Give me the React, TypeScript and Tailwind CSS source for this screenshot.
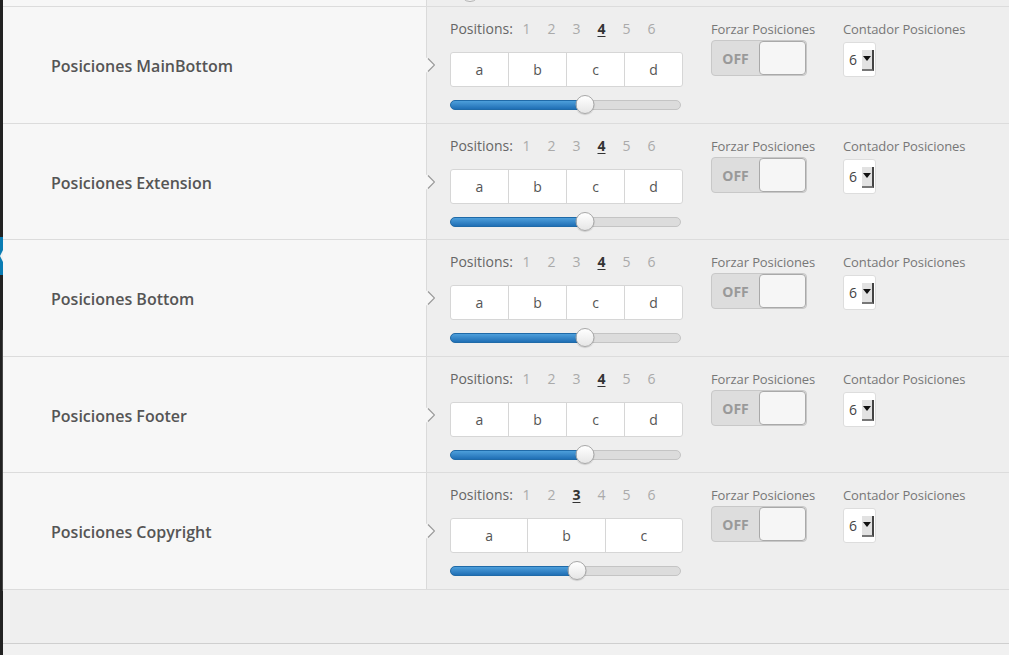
import React from "react";

type RowDef = { label: string; n: number; h: string; thumb: number };

const rows: RowDef[] = [
  { label: "Posiciones MainBottom", n: 4, h: "h-[117px]", thumb: 135 },
  { label: "Posiciones Extension", n: 4, h: "h-[116px]", thumb: 135 },
  { label: "Posiciones Bottom", n: 4, h: "h-[117px]", thumb: 135 },
  { label: "Posiciones Footer", n: 4, h: "h-[116px]", thumb: 135 },
  { label: "Posiciones Copyright", n: 3, h: "h-[117px]", thumb: 127 },
];

const letters = ["a", "b", "c", "d", "e", "f"];

function Chevron() {
  return (
    <svg
      className="absolute left-[422px] top-1/2 -translate-y-1/2"
      width="10"
      height="16"
      viewBox="0 0 10 16"
    >
      <polygon points="0,0 3,1.5 9.5,8 3,14.5 0,16" fill="#f7f7f7" />
      <polyline points="3,1.5 9.5,8 3,14.5" fill="none" stroke="#9a9a9a" strokeWidth="1.2" />
    </svg>
  );
}

function Slider({ thumb }: { thumb: number }) {
  return (
    <div className="relative mt-[8px] h-[20px] w-[231px]">
      <div className="absolute left-0 right-0 top-[5px] h-[10px] rounded-full border border-[#c4c4c4] bg-[#dcdcdc]" />
      <div
        className="absolute left-0 top-[5px] h-[10px] rounded-l-full border border-[#1f6aa8] bg-gradient-to-b from-[#4d9fdb] to-[#1f6fb5]"
        style={{ width: thumb }}
      />
      <div
        className="absolute top-0 h-[19px] w-[19px] -translate-x-1/2 rounded-full border border-[#a8a8a8] bg-gradient-to-b from-[#ffffff] to-[#e6e6e6] shadow-[0_1px_1px_rgba(0,0,0,0.15)]"
        style={{ left: thumb }}
      />
    </div>
  );
}

function Row({ r }: { r: RowDef }) {
  return (
    <div className={`relative flex ${r.h} border-b border-[#dcdcdc]`}>
      <div className="flex w-[424px] shrink-0 items-center border-r border-[#dadada] bg-[#f7f7f7] pl-[48px] pt-[2px]">
        <span className="text-[16px] font-semibold text-[#555555]">{r.label}</span>
      </div>
      <Chevron />
      <div className="flex flex-1 bg-[#eeeeee] pl-[23px] pt-[12px]">
        <div className="w-[233px]">
          <div className="flex h-[20px] items-center text-[14px] leading-[20px]">
            <span className="w-[64px] text-[#666666]">Positions:</span>
            {[1, 2, 3, 4, 5, 6].map((k) => (
              <span
                key={k}
                className={
                  k === r.n
                    ? "w-[25px] text-center font-bold text-[#333333] underline underline-offset-2"
                    : "w-[25px] text-center text-[#aaaaaa]"
                }
              >
                {k}
              </span>
            ))}
          </div>
          <div className="mt-[13px] flex h-[35px] w-[233px] overflow-hidden rounded-[3px] border border-[#d6d6d6] bg-white">
            {letters.slice(0, r.n).map((l, i) => (
              <div
                key={l}
                className={
                  i === 0
                    ? "flex flex-1 items-center justify-center text-[14px] text-[#555555]"
                    : "flex flex-1 items-center justify-center border-l border-[#d6d6d6] text-[14px] text-[#555555]"
                }
              >
                {l}
              </div>
            ))}
          </div>
          <Slider thumb={r.thumb} />
        </div>
        <div className="ml-[28px] w-[132px]">
          <div className="h-[20px] text-[13px] tracking-[-0.1px] leading-[20px] text-[#777777]">Forzar Posiciones</div>
          <div className="mt-[1px] flex h-[36px] w-[96px] overflow-hidden rounded-[4px] border border-[#c8c8c8] bg-[#dddddd]">
            <div className="flex w-[47px] items-center justify-center text-[14px] font-bold text-[#999999]">OFF</div>
            <div className="flex-1 rounded-[4px] border border-[#a9a9a9] bg-[#f6f6f6]" />
          </div>
        </div>
        <div>
          <div className="h-[20px] text-[13px] tracking-[-0.1px] leading-[20px] text-[#777777]">Contador Posiciones</div>
          <div className="relative mt-[3px] h-[35px] w-[33px] rounded-[3px] border border-[#dddddd] bg-white">
            <span className="absolute left-[5px] top-[7px] text-[14px] leading-[20px] text-[#444444]">6</span>
            <div className="absolute left-[18px] top-[7px] flex h-[21px] w-[12px] justify-center border-b-2 border-r-2 border-b-[#777777] border-r-[#444444] bg-[#e2e2e2] pt-[6px]">
              <div className="h-0 w-0 border-x-[4px] border-t-[5px] border-x-transparent border-t-[#111111]" />
            </div>
          </div>
        </div>
      </div>
    </div>
  );
}

export default function App() {
  return (
    <div className="flex h-[655px] w-[1009px] overflow-hidden font-['Open_Sans',sans-serif]">
      <div className="relative w-[3px] shrink-0 bg-[#222222]">
        <div className="absolute left-0 top-[237px] h-[38px] w-[3px] bg-[#0a7cb3]" />
        <div className="absolute right-0 top-[250px] h-0 w-0 border-y-[6px] border-r-[3px] border-y-transparent border-r-[#f2f2f2]" />
        <div className="absolute left-[2px] top-[330px] h-[261px] w-[1px] bg-[#4a4a4a]" />
      </div>
      <div className="flex flex-1 flex-col">
        <div className="relative flex h-[7px] border-b border-[#dcdcdc]">
          <div className="w-[424px] shrink-0 border-r border-[#dadada] bg-[#f7f7f7]" />
          <div className="flex-1 bg-[#eeeeee]" />
          <div className="absolute left-[457px] top-0 h-[2px] w-[20px] overflow-hidden">
            <div className="absolute left-0 top-[-18px] h-[20px] w-[20px] rounded-full border border-[#b0b0b0] bg-[#f4f4f4]" />
          </div>
        </div>
        {rows.map((r) => (
          <Row key={r.label} r={r} />
        ))}
        <div className="h-[54px] border-b border-[#cfcfcf] bg-[#efefef]" />
        <div className="flex-1 bg-[#f1f1f1]" />
      </div>
    </div>
  );
}
